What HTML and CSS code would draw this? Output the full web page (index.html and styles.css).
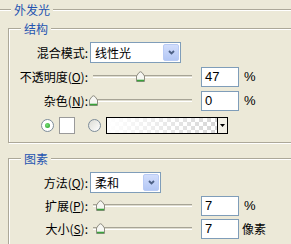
FILE: index.html
```html
<!DOCTYPE html>
<html lang="zh">
<head>
<meta charset="UTF-8" />
<title>外发光</title>
<link rel="stylesheet" href="styles.css">
</head>
<body>

<div class="group outer">
  <div class="caption caption-outer">外发光</div>

  <div class="group section">
    <div class="caption">结构</div>

    <div class="row">
      <label class="label">混合模式:</label>
      <div class="combo combo-wide">
        <span class="combo-text">线性光</span>
        <span class="combo-btn"><svg width="7" height="5" viewBox="0 0 7 5"><path d="M1 1 L3.5 3.5 L6 1" fill="none" stroke="#4d6185" stroke-width="1.8"/></svg></span>
      </div>
    </div>

    <div class="row">
      <label class="label">不透明度(<u>O</u>):</label>
      <div class="slider">
        <div class="track"></div>
        <svg class="thumb" style="left:47%" width="9" height="11" viewBox="0 0 9 11"><path d="M0.5 10.5 V5 L3 1.5 Q4.5 0 6 1.5 L8.5 5 V10.5 Z" fill="#f6f6f2" stroke="#8f8d82"/><path d="M1 9.5 H8" stroke="#3aa23a" stroke-width="1.6"/></svg>
      </div>
      <div class="field">47</div>
      <span class="unit">%</span>
    </div>

    <div class="row">
      <label class="label">杂色(<u>N</u>):</label>
      <div class="slider">
        <div class="track"></div>
        <svg class="thumb" style="left:0%" width="9" height="11" viewBox="0 0 9 11"><path d="M0.5 10.5 V5 L3 1.5 Q4.5 0 6 1.5 L8.5 5 V10.5 Z" fill="#f6f6f2" stroke="#8f8d82"/><path d="M1 9.5 H8" stroke="#3aa23a" stroke-width="1.6"/></svg>
      </div>
      <div class="field">0</div>
      <span class="unit">%</span>
    </div>

    <div class="color-row">
      <span class="radio on"></span>
      <span class="swatch"></span>
      <span class="radio radio-far"></span>
      <div class="gradient">
        <span class="ramp"></span>
        <span class="ramp-btn"><svg width="5" height="3" viewBox="0 0 5 3"><path d="M0 0 H5 L2.5 3 Z" fill="#000"/></svg></span>
      </div>
    </div>
  </div>

  <div class="group section section-shape">
    <div class="caption">图素</div>

    <div class="row">
      <label class="label">方法(<u>Q</u>):</label>
      <div class="combo combo-narrow">
        <span class="combo-text">柔和</span>
        <span class="combo-btn"><svg width="7" height="5" viewBox="0 0 7 5"><path d="M1 1 L3.5 3.5 L6 1" fill="none" stroke="#4d6185" stroke-width="1.8"/></svg></span>
      </div>
    </div>

    <div class="row">
      <label class="label">扩展(<u>P</u>):</label>
      <div class="slider">
        <div class="track"></div>
        <svg class="thumb" style="left:7%" width="9" height="11" viewBox="0 0 9 11"><path d="M0.5 10.5 V5 L3 1.5 Q4.5 0 6 1.5 L8.5 5 V10.5 Z" fill="#f6f6f2" stroke="#8f8d82"/><path d="M1 9.5 H8" stroke="#3aa23a" stroke-width="1.6"/></svg>
      </div>
      <div class="field">7</div>
      <span class="unit">%</span>
    </div>

    <div class="row">
      <label class="label">大小(<u>S</u>):</label>
      <div class="slider">
        <div class="track"></div>
        <svg class="thumb" style="left:7%" width="9" height="11" viewBox="0 0 9 11"><path d="M0.5 10.5 V5 L3 1.5 Q4.5 0 6 1.5 L8.5 5 V10.5 Z" fill="#f6f6f2" stroke="#8f8d82"/><path d="M1 9.5 H8" stroke="#3aa23a" stroke-width="1.6"/></svg>
      </div>
      <div class="field">7</div>
      <span class="unit unit-cjk">像素</span>
    </div>
  </div>
</div>

</body>
</html>
```

FILE: styles.css
```css
body {
  margin: 0;
  width: 291px;
  height: 244px;
  overflow: hidden;
  background: #ece9d8;
  font-family: "Noto Sans CJK SC", "Noto Sans", sans-serif;
  font-size: 12px;
  color: #000;
}
.group {
  border: 1px solid #aca899;
  box-shadow: inset 1px 1px 0 #fff, 1px 1px 0 #fff;
}
.outer {
  width: 300px;
  height: 250px;
  margin: 9px 0 0 -3px;
  padding: 0 0 0 10px;
  box-sizing: border-box;
}
.caption {
  display: block;
  width: max-content;
  height: 14px;
  line-height: 14px;
  margin: -7px 0 6px 12px;
  padding: 0 3px;
  background: #ece9d8;
  color: #2453b0;
}
.caption-outer {
  margin: -7px 0 -7px 3px;
}
.section {
  margin-top: 18px;
  padding-bottom: 5px;
}
.section-shape {
  margin-top: 15px;
}
.row {
  display: flex;
  align-items: center;
  height: 21px;
  margin-bottom: 3px;
}
.section-shape .row {
  margin-bottom: 2px;
}
.label {
  flex: none;
  width: 81px;
  box-sizing: border-box;
  padding-right: 2px;
  text-align: right;
  line-height: 21px;
  white-space: nowrap;
}
.combo {
  display: flex;
  align-items: center;
  height: 21px;
  box-sizing: border-box;
  border: 1px solid #7f9db9;
  background: #fff;
}
.combo-wide { width: 91px; }
.combo-narrow { width: 71px; }
.combo-text {
  flex: 1;
  padding-left: 4px;
  line-height: 19px;
}
.combo-btn {
  display: flex;
  align-items: center;
  justify-content: center;
  width: 16px;
  height: 17px;
  margin-right: 1px;
  box-sizing: border-box;
  border: 1px solid #b9cbf5;
  border-radius: 2px;
  background: linear-gradient(#d2defc, #b3c7f5);
}
.slider {
  position: relative;
  flex: none;
  width: 99px;
  height: 21px;
  margin: 0 3px;
}
.track {
  height: 1px;
  margin-top: 9px;
  border-top: 1px solid #a7a496;
  border-bottom: 1px solid #fff;
  background: #dedccf;
}
.thumb {
  position: absolute;
  top: 5px;
  margin-left: -4px;
}
.field {
  width: 38px;
  height: 20px;
  box-sizing: border-box;
  margin-left: 6px;
  padding-left: 3px;
  border: 1px solid #7f9db9;
  background: #fff;
  font-family: "Liberation Sans", Arial, sans-serif;
  font-size: 13px;
  line-height: 18px;
}
.unit {
  margin-left: 5px;
  font-family: "Liberation Sans", Arial, sans-serif;
  font-size: 13px;
}
.unit-cjk {
  margin-left: 3px;
  font-family: "Noto Sans CJK SC", sans-serif;
  font-size: 12px;
}
.color-row {
  display: flex;
  align-items: center;
  height: 23px;
  padding-left: 32px;
}
.radio {
  position: relative;
  flex: none;
  width: 13px;
  height: 13px;
  box-sizing: border-box;
  border: 1px solid #7d8c99;
  border-radius: 50%;
  background: linear-gradient(135deg, #dcdcd5, #fff);
}
.radio.on {
  background: #fff;
}
.radio.on::after {
  content: "";
  position: absolute;
  left: 3px;
  top: 3px;
  width: 5px;
  height: 5px;
  border-radius: 50%;
  background: radial-gradient(circle at 40% 40%, #7be07b, #1f9a1f);
}
.radio-far {
  margin-left: 13px;
}
.swatch {
  flex: none;
  width: 16px;
  height: 17px;
  margin-left: 5px;
  box-sizing: border-box;
  border: 1px solid #9a9a9a;
  background: #fff;
}
.gradient {
  display: flex;
  width: 122px;
  height: 17px;
  margin-left: 5px;
  box-sizing: border-box;
  border: 1px solid #000;
}
.ramp {
  flex: 1;
  background:
    linear-gradient(to right, #fff 0%, rgba(255, 255, 255, 0) 100%),
    conic-gradient(#d6d6d6 25%, #fff 0 50%, #d6d6d6 0 75%, #fff 0) 0 0 / 8px 8px;
}
.ramp-btn {
  display: flex;
  align-items: center;
  justify-content: center;
  width: 9px;
  border-left: 1px solid #000;
  background: #f2f0e6;
}
```
